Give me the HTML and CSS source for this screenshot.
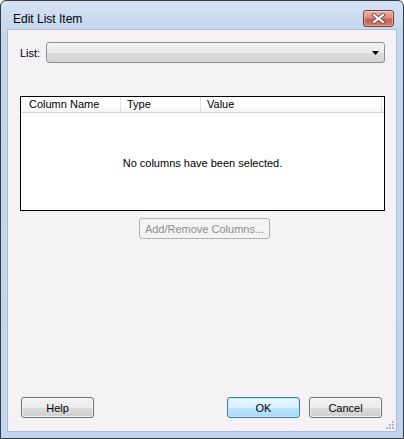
FILE: index.html
```html
<!DOCTYPE html>
<html>
<head>
<meta charset="utf-8">
<link rel="stylesheet" href="styles.css">
</head>
<body>
<div class="window">
  <div class="titlebar">
    <span class="title">Edit List Item</span>
    <div class="close">
      <svg width="15" height="11" viewBox="0 0 15 11">
        <path d="M3 2 L12 9 M12 2 L3 9" stroke="#7a5050" stroke-width="4" stroke-linecap="square" fill="none"/>
        <path d="M3 2 L12 9 M12 2 L3 9" stroke="#ffffff" stroke-width="2" stroke-linecap="square" fill="none"/>
      </svg>
    </div>
  </div>
  <div class="client">
    <div class="list-row">
      <span class="label">List:</span>
      <div class="combo">
        <svg class="arrow" width="7" height="4" viewBox="0 0 7 4"><path d="M0 0 H7 L3.5 4 Z" fill="#000"/></svg>
      </div>
    </div>
    <div class="listview">
      <div class="header">
        <div class="col col1">Column Name</div>
        <div class="col col2">Type</div>
        <div class="col col3">Value</div>
      </div>
      <div class="empty">No columns have been selected.</div>
    </div>
    <div class="add-row">
      <div class="btn disabled addbtn">Add/Remove Columns...</div>
    </div>
    <div class="spacer"></div>
    <div class="footer">
      <div class="btn">Help</div>
      <div class="right-btns">
        <div class="btn default">OK</div>
        <div class="btn">Cancel</div>
      </div>
    </div>
    <svg class="grip" width="10" height="10" viewBox="0 0 10 10">
      <g fill="#b8b4b8">
        <rect x="8" y="2" width="2" height="2"/>
        <rect x="5" y="5" width="2" height="2"/><rect x="8" y="5" width="2" height="2"/>
        <rect x="2" y="8" width="2" height="2"/><rect x="5" y="8" width="2" height="2"/><rect x="8" y="8" width="2" height="2"/>
      </g>
    </svg>
  </div>
</div>
</body>
</html>
```

FILE: styles.css
```css
html, body {
  margin: 0;
  padding: 0;
  background: #ffffff;
}
body {
  font-family: "Liberation Sans", Arial, sans-serif;
  font-size: 11px;
  color: #000;
}
.window {
  width: 404px;
  height: 439px;
  box-sizing: border-box;
  border: 1px solid #333a44;
  border-radius: 6px 6px 0 0;
  background: linear-gradient(#d6e4f4 0px, #c4d7ee 30px, #c0d5ee 100%);
  display: flex;
  flex-direction: column;
  overflow: hidden;
}
.titlebar {
  height: 29px;
  flex: none;
  display: flex;
  align-items: flex-start;
  justify-content: space-between;
  padding: 0 9px 0 12px;
}
.title {
  font-size: 12px;
  line-height: 14px;
  margin-top: 11px;
  color: #000;
}
.close {
  margin-top: 9px;
  width: 29px;
  height: 15px;
  border: 1px solid #7a3a36;
  border-radius: 3px;
  background: linear-gradient(#eab3a8 0%, #dc8e80 45%, #c9604e 55%, #d27c66 100%);
  display: flex;
  align-items: center;
  justify-content: center;
  box-shadow: inset 0 0 0 1px rgba(255,255,255,0.35);
}
.client {
  position: relative;
  flex: 1;
  margin: 0 7px 7px 7px;
  background: #f5f2f5;
  border: 0;
  display: flex;
  flex-direction: column;
  padding: 12px 0 13px 0;
  box-shadow: 0 0 0 1px #a9bdd6;
}
.list-row {
  display: flex;
  align-items: center;
  height: 21px;
  padding-left: 12px;
}
.label {
  width: 26px;
}
.combo {
  position: relative;
  width: 339px;
  height: 21px;
  box-sizing: border-box;
  border: 1px solid #8e8f8f;
  border-radius: 3px;
  background: linear-gradient(#f2f2f2 0%, #ebebeb 50%, #dddddd 51%, #d3d3d3 100%);
  display: flex;
  align-items: center;
  justify-content: flex-end;
  padding-right: 5px;
}
.listview {
  margin: 33px 0 0 12px;
  width: 365px;
  height: 115px;
  box-sizing: border-box;
  border: 1px solid #000;
  background: #fff;
  display: flex;
  flex-direction: column;
}
.header {
  display: flex;
  height: 16px;
  box-sizing: border-box;
  border-bottom: 1px solid #d5d5d5;
  background: linear-gradient(#ffffff 0%, #ffffff 60%, #f4f4f4 100%);
}
.col {
  box-sizing: border-box;
  line-height: 15px;
  border-right: 1px solid #e3e3e3;
}
.col1 { width: 100px; padding-left: 8px; }
.col2 { width: 80px; padding-left: 6px; }
.col3 { width: 181px; padding-left: 6px; }
.empty {
  flex: 1;
  display: flex;
  align-items: center;
  justify-content: center;
  padding-top: 3px;
}
.add-row {
  display: flex;
  padding-left: 131px;
  margin-top: 7px;
}
.spacer { flex: 1; }
.btn {
  width: 73px;
  height: 21px;
  box-sizing: border-box;
  border: 1px solid #707070;
  border-radius: 3px;
  background: linear-gradient(#f2f2f2 0%, #ebebeb 50%, #dddddd 51%, #cfcfcf 100%);
  box-shadow: inset 0 0 0 1px rgba(255,255,255,0.7);
  display: flex;
  align-items: center;
  justify-content: center;
  font-size: 11px;
}
.btn.disabled {
  width: 131px;
  border-color: #adb2b5;
  background: #f4f4f4;
  color: #8d8d8d;
  box-shadow: none;
}
.btn.default {
  border-color: #3c7fb1;
  background: linear-gradient(#eaf6fd 0%, #d9f0fc 50%, #bee6fd 51%, #a7d9f5 100%);
  box-shadow: inset 0 0 0 1px #c4e5f6;
}
.footer {
  display: flex;
  justify-content: space-between;
  padding: 0 14px 0 13px;
}
.right-btns {
  display: flex;
  gap: 9px;
}
.grip {
  position: absolute;
  right: 2px;
  bottom: 2px;
}
```
